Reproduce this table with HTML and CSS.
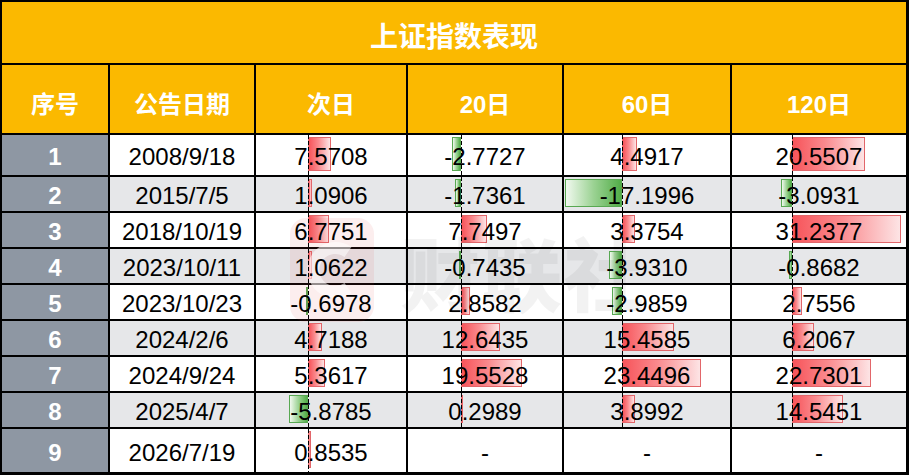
FILE: index.html
```html
<!DOCTYPE html>
<html lang="zh-CN">
<head>
<meta charset="utf-8">
<title>上证指数表现</title>
<link rel="stylesheet" href="styles.css">
</head>
<body>
<div class="sheet">
  <div class="grid">
    <div class="title">上证指数表现</div>
    <div class="hd">序号</div>
    <div class="hd">公告日期</div>
    <div class="hd">次日</div>
    <div class="hd">20日</div>
    <div class="hd">60日</div>
    <div class="hd">120日</div>

    <div class="idx">1</div>
    <div class="cell">2008/9/18</div>
    <div class="cell c1"><span class="bar pos" style="width:23px"></span><span class="axis"></span><span class="val">7.5708</span></div>
    <div class="cell c2"><span class="bar neg" style="width:9px"></span><span class="axis"></span><span class="val">-2.7727</span></div>
    <div class="cell c3"><span class="bar pos" style="width:15px"></span><span class="axis"></span><span class="val">4.4917</span></div>
    <div class="cell c4"><span class="bar pos" style="width:73px"></span><span class="axis"></span><span class="val">20.5507</span></div>

    <div class="idx">2</div>
    <div class="cell alt">2015/7/5</div>
    <div class="cell alt c1"><span class="bar pos" style="width:4px"></span><span class="axis"></span><span class="val">1.0906</span></div>
    <div class="cell alt c2"><span class="bar neg" style="width:6px"></span><span class="axis"></span><span class="val">-1.7361</span></div>
    <div class="cell alt c3"><span class="bar neg" style="width:57px"></span><span class="axis"></span><span class="val">-17.1996</span></div>
    <div class="cell alt c4"><span class="bar neg" style="width:11px"></span><span class="axis"></span><span class="val">-3.0931</span></div>

    <div class="idx">3</div>
    <div class="cell">2018/10/19</div>
    <div class="cell c1"><span class="bar pos" style="width:21px"></span><span class="axis"></span><span class="val">6.7751</span></div>
    <div class="cell c2"><span class="bar pos" style="width:26px"></span><span class="axis"></span><span class="val">7.7497</span></div>
    <div class="cell c3"><span class="bar pos" style="width:13px"></span><span class="axis"></span><span class="val">3.3754</span></div>
    <div class="cell c4"><span class="bar pos" style="width:109px"></span><span class="axis"></span><span class="val">31.2377</span></div>

    <div class="idx">4</div>
    <div class="cell alt">2023/10/11</div>
    <div class="cell alt c1"><span class="bar pos" style="width:4px"></span><span class="axis"></span><span class="val">1.0622</span></div>
    <div class="cell alt c2"><span class="bar neg" style="width:2px"></span><span class="axis"></span><span class="val">-0.7435</span></div>
    <div class="cell alt c3"><span class="bar neg" style="width:13px"></span><span class="axis"></span><span class="val">-3.9310</span></div>
    <div class="cell alt c4"><span class="bar neg" style="width:3px"></span><span class="axis"></span><span class="val">-0.8682</span></div>

    <div class="idx">5</div>
    <div class="cell">2023/10/23</div>
    <div class="cell c1"><span class="bar neg" style="width:2px"></span><span class="axis"></span><span class="val">-0.6978</span></div>
    <div class="cell c2"><span class="bar pos" style="width:9px"></span><span class="axis"></span><span class="val">2.8582</span></div>
    <div class="cell c3"><span class="bar neg" style="width:10px"></span><span class="axis"></span><span class="val">-2.9859</span></div>
    <div class="cell c4"><span class="bar pos" style="width:10px"></span><span class="axis"></span><span class="val">2.7556</span></div>

    <div class="idx">6</div>
    <div class="cell alt">2024/2/6</div>
    <div class="cell alt c1"><span class="bar pos" style="width:14px"></span><span class="axis"></span><span class="val">4.7188</span></div>
    <div class="cell alt c2"><span class="bar pos" style="width:39px"></span><span class="axis"></span><span class="val">12.6435</span></div>
    <div class="cell alt c3"><span class="bar pos" style="width:52px"></span><span class="axis"></span><span class="val">15.4585</span></div>
    <div class="cell alt c4"><span class="bar pos" style="width:22px"></span><span class="axis"></span><span class="val">6.2067</span></div>

    <div class="idx">7</div>
    <div class="cell">2024/9/24</div>
    <div class="cell c1"><span class="bar pos" style="width:17px"></span><span class="axis"></span><span class="val">5.3617</span></div>
    <div class="cell c2"><span class="bar pos" style="width:61px"></span><span class="axis"></span><span class="val">19.5528</span></div>
    <div class="cell c3"><span class="bar pos" style="width:79px"></span><span class="axis"></span><span class="val">23.4496</span></div>
    <div class="cell c4"><span class="bar pos" style="width:79px"></span><span class="axis"></span><span class="val">22.7301</span></div>

    <div class="idx">8</div>
    <div class="cell alt">2025/4/7</div>
    <div class="cell alt c1"><span class="bar neg" style="width:19px"></span><span class="axis"></span><span class="val">-5.8785</span></div>
    <div class="cell alt c2"><span class="bar pos" style="width:2px"></span><span class="axis"></span><span class="val">0.2989</span></div>
    <div class="cell alt c3"><span class="bar pos" style="width:13px"></span><span class="axis"></span><span class="val">3.8992</span></div>
    <div class="cell alt c4"><span class="bar pos" style="width:51px"></span><span class="axis"></span><span class="val">14.5451</span></div>

    <div class="idx">9</div>
    <div class="cell">2026/7/19</div>
    <div class="cell c1"><span class="bar pos" style="width:3px"></span><span class="axis"></span><span class="val">0.8535</span></div>
    <div class="cell"><span class="val">-</span></div>
    <div class="cell"><span class="val">-</span></div>
    <div class="cell"><span class="val">-</span></div>
  </div>

  <div class="watermark" aria-hidden="true">
    <svg class="wm-logo" width="84" height="104" viewBox="0 0 84 104">
      <rect x="0" y="0" width="84" height="104" rx="16" fill="#e0403f" fill-opacity="0.09"/>
      <path d="M58 34 A22 22 0 1 0 58 70" fill="none" stroke="#ffffff" stroke-opacity="0.55" stroke-width="12"/>
    </svg>
    <span class="wm-text">财联社</span>
  </div>
</div>
</body>
</html>
```

FILE: styles.css
```css
html, body {
  margin: 0;
  padding: 0;
  background: #ffffff;
}

.sheet {
  position: relative;
  width: 909px;
  height: 475px;
  font-family: "Liberation Sans", "Noto Sans CJK SC", Arial, sans-serif;
}

.grid {
  display: grid;
  grid-template-columns: 106px 144px 150px 154px 166px 174px;
  grid-template-rows: 61px 68px 40px repeat(7, 34px) 43px;
  gap: 2px;
  padding: 2px 3px 3px 2px;
  background: #000000;
  box-sizing: border-box;
  width: 909px;
  height: 475px;
}

.title {
  grid-column: 1 / -1;
  background: #fbb900;
  color: #ffffff;
  font-family: "Noto Sans CJK SC", sans-serif;
  font-weight: 700;
  font-size: 28px;
  display: flex;
  align-items: center;
  justify-content: center;
  padding-top: 5px;
  box-sizing: border-box;
}

.hd {
  background: #fbb900;
  color: #ffffff;
  font-weight: 700;
  font-size: 24px;
  display: flex;
  align-items: center;
  justify-content: center;
  padding-top: 6px;
  box-sizing: border-box;
}

.idx {
  background: #8e97a3;
  color: #ffffff;
  font-weight: 700;
  font-size: 24px;
  display: flex;
  align-items: center;
  justify-content: center;
  padding-top: 4px;
  box-sizing: border-box;
}

.cell {
  position: relative;
  background: #ffffff;
  color: #000000;
  font-size: 24px;
  display: flex;
  align-items: center;
  justify-content: center;
  padding-top: 4px;
  box-sizing: border-box;
}

.cell.alt {
  background: #e6e7e9;
}

.c1 { --axis: 52px; }
.c2 { --axis: 53px; }
.c3 { --axis: 58px; }
.c4 { --axis: 60px; }

.val {
  position: relative;
  z-index: 2;
}

.bar {
  position: absolute;
  top: 2px;
  bottom: 4px;
  box-sizing: border-box;
}

.bar.pos {
  left: var(--axis);
  background: linear-gradient(to right, #f7545a 0%, #fa8a8e 45%, #fde4e5 100%);
  border: 1px solid #e2666a;
}

.bar.neg {
  right: calc(100% - var(--axis));
  background: linear-gradient(to left, #52ad48 0%, #9bd293 50%, #f1f9ef 100%);
  border: 1px solid #58a852;
}

.axis {
  position: absolute;
  top: 0;
  bottom: 0;
  left: var(--axis);
  width: 1px;
  background: repeating-linear-gradient(to bottom, #000000 0 4px, transparent 4px 6px);
  z-index: 3;
}

.watermark {
  position: absolute;
  left: 290px;
  top: 218px;
  display: flex;
  align-items: center;
  gap: 26px;
  z-index: 1;
  pointer-events: none;
}

.wm-logo {
  display: block;
}

.wm-text {
  font-family: "Noto Sans CJK SC", sans-serif;
  font-weight: 900;
  font-size: 80px;
  line-height: 1;
  color: rgba(0, 0, 0, 0.05);
  letter-spacing: 2px;
}
```
